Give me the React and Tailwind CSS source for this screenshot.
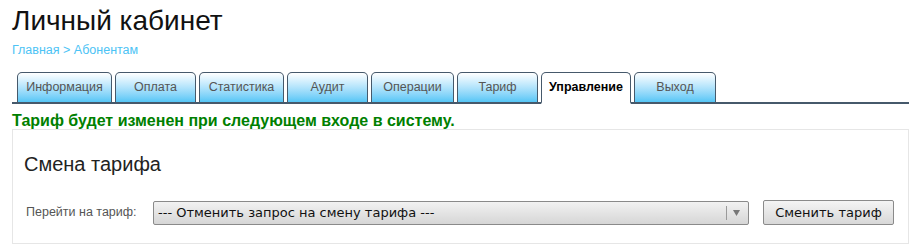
import React from "react";

const tabs = [
  { label: "Информация", w: "w-[95px]" },
  { label: "Оплата", w: "w-[81px]" },
  { label: "Статистика", w: "w-[85px]" },
  { label: "Аудит", w: "w-[81px]" },
  { label: "Операции", w: "w-[83px]" },
  { label: "Тариф", w: "w-[81px]" },
  { label: "Управление", w: "w-[90px]", active: true },
  { label: "Выход", w: "w-[82px]" },
];

const App = () => {
  return (
    <div className="min-h-[250px] bg-white pl-[12px] pr-[9px] font-['Liberation_Sans',Arial,sans-serif]">
      <h1 className="pt-[5px] text-[28px] leading-[32px] text-[#111]">Личный кабинет</h1>
      <div className="mt-[6px] text-[12.5px] leading-[14px] text-[#4cc3f5]">
        Главная &gt; Абонентам
      </div>

      <ul className="mt-[15px] flex gap-[3px] border-b-2 border-[#46596b] pl-[5px]">
        {tabs.map((t) => (
          <li
            key={t.label}
            className={`-mb-[2px] flex h-[32px] items-center justify-center rounded-t-[5px] border border-b-2 border-[#46596b] text-[12.5px] ${t.w} ${
              t.active
                ? "border-b-white bg-white font-bold text-black"
                : "bg-gradient-to-b from-white to-[#54c6f6] text-[#555]"
            }`}
          >
            {t.label}
          </li>
        ))}
      </ul>

      <p className="mt-[9px] text-[16px] font-bold leading-[16px] text-[#008000]">
        Тариф будет изменен при следующем входе в систему.
      </p>

      <div className="h-[115px] border border-[#e6e6e6] px-[11px]">
        <h2 className="mt-[22px] text-[20px] leading-[24px] text-[#222]">Смена тарифа</h2>
        <div className="mt-[24px] flex items-center">
          <span className="w-[129px] pl-[2px] text-[12.5px] text-[#555]">Перейти на тариф:</span>
          <div className="flex h-[24px] w-[596px] items-center rounded-[2px] border border-[#8a8a8a] bg-gradient-to-b from-[#f2f2f2] to-[#d6d6d6] font-['DejaVu_Sans',sans-serif] text-[13px] text-[#111]">
            <span className="flex-1 pl-[4px]">--- Отменить запрос на смену тарифа ---</span>
            <span className="h-[14px] border-l border-[#9a9a9a]" />
            <svg width="20" height="10" viewBox="0 0 20 10" className="mr-[1px]">
              <path d="M6 2 L13 2 L9.5 8 Z" fill="#777" />
            </svg>
          </div>
          <button className="ml-[14px] h-[25px] w-[131px] rounded-[2px] border border-[#8a8a8a] bg-gradient-to-b from-[#f4f4f4] to-[#d8d8d8] font-['DejaVu_Sans',sans-serif] text-[13px] text-[#111]">
            Сменить тариф
          </button>
        </div>
      </div>
    </div>
  );
};

export default App;
